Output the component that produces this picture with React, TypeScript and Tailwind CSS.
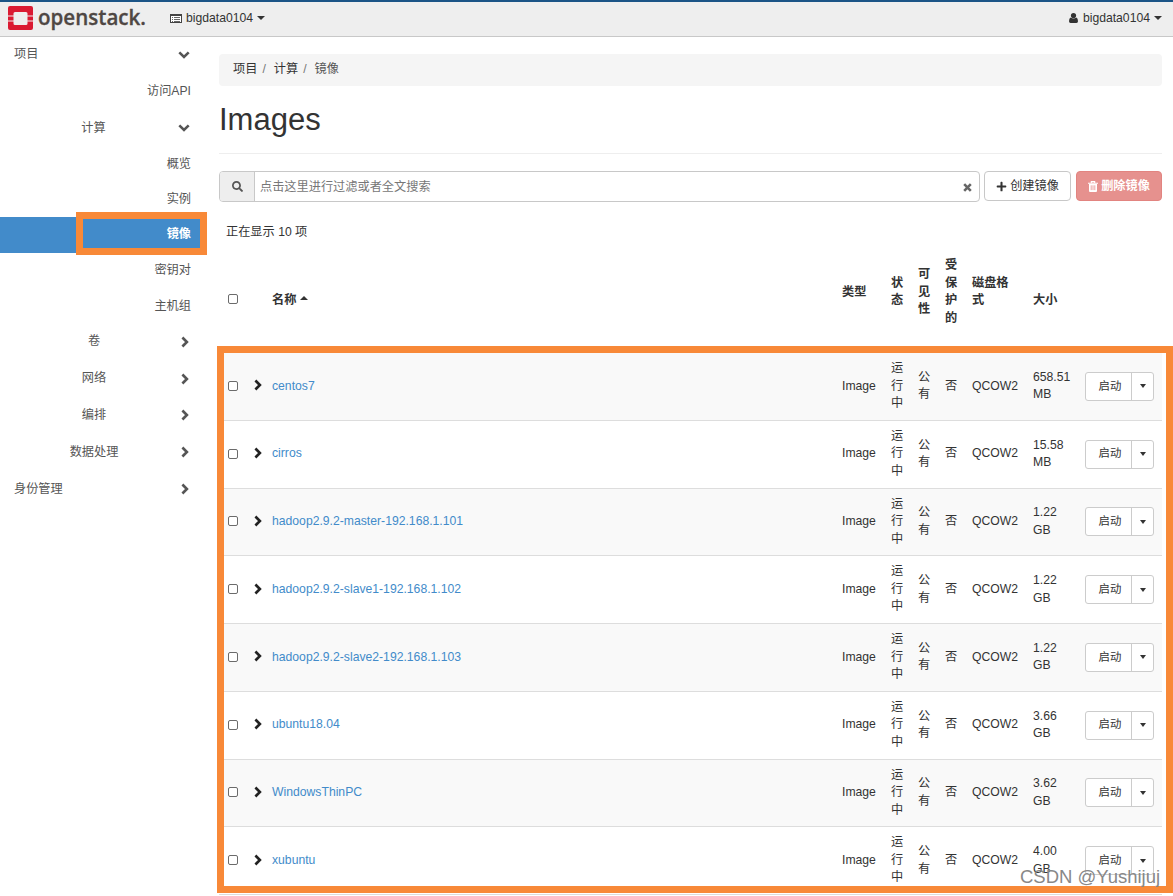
import { FaPlus, FaSearch } from "react-icons/fa";

const images = [
  { name: "centos7", size: "658.51", unit: "MB" },
  { name: "cirros", size: "15.58", unit: "MB" },
  { name: "hadoop2.9.2-master-192.168.1.101", size: "1.22", unit: "GB" },
  { name: "hadoop2.9.2-slave1-192.168.1.102", size: "1.22", unit: "GB" },
  { name: "hadoop2.9.2-slave2-192.168.1.103", size: "1.22", unit: "GB" },
  { name: "ubuntu18.04", size: "3.66", unit: "GB" },
  { name: "WindowsThinPC", size: "3.62", unit: "GB" },
  { name: "xubuntu", size: "4.00", unit: "GB" },
];

const computeItems = ["概览", "实例", "镜像", "密钥对", "主机组"];
const closedGroups = ["卷", "网络", "编排", "数据处理"];

const columns =
  "grid grid-cols-[25px_19px_570px_49px_27px_27px_27px_61px_52px_75px]";

const ChevronRight = ({ className = "" }: { className?: string }) => (
  <svg className={className} width="8" height="12" viewBox="0 0 8 12">
    <path d="M1.4 1.5 L5.9 6 L1.4 10.5" fill="none" stroke="currentColor" strokeWidth="2.6" />
  </svg>
);

const ChevronDown = () => (
  <svg width="12" height="8" viewBox="0 0 12 8">
    <path d="M1.3 1.4 L6 6 L10.7 1.4" fill="none" stroke="currentColor" strokeWidth="2.6" />
  </svg>
);

const Caret = ({ className = "" }: { className?: string }) => (
  <svg className={className} width="8" height="4" viewBox="0 0 8 4">
    <path d="M0 0h8L4 4z" fill="currentColor" />
  </svg>
);

const Checkbox = () => (
  <span className="block h-[10px] w-[10px] rounded-[2px] border border-[#6b6b6b] bg-white" />
);

const Logo = () => (
  <svg width="144" height="32" viewBox="0 0 144 32" className="shrink-0">
    <path
      fill="#da1a32"
      d="M2 3h21a2 2 0 0 1 2 2v7.500h-5.500V10.500a1.500 1.500 0 0 0-1.500-1.500H7a1.500 1.500 0 0 0-1.500 1.500v2H0V5a2 2 0 0 1 2-2zM0 18.500h5.500v2A1.500 1.500 0 0 0 7 22h11a1.500 1.500 0 0 0 1.500-1.500v-2H25V25a2 2 0 0 1-2 2H2a2 2 0 0 1-2-2zM0 13.500h5.500v4H0zM19.500 13.500H25v4h-5.500z"
    />
    <text
      x="30"
      y="21.500"
      fill="#4f4743"
      fontFamily="Open Sans"
      fontSize="21.500"
      fontWeight="600"
      stroke="#4f4743"
      strokeWidth="0.300"
      textLength="108"
      lengthAdjust="spacingAndGlyphs"
    >
      openstack.
    </text>
  </svg>
);

const Header = () => {
  return (
    <header className="flex h-[37px] items-center justify-between border-t-2 border-b border-t-[#1b5486] border-b-[#c8c8c8] bg-[#eeeeee] pl-2 pr-[11px]">
      <div className="flex items-center">
        <Logo />
        <div className="ml-[18px] flex items-center pb-[2px]">
          <svg width="12" height="10" viewBox="0 0 12 10" className="mt-[2px] mr-1" shapeRendering="crispEdges">
            <rect x="0.500" y="0.500" width="11" height="8" fill="#fff" stroke="#444" />
            <path d="M0 1.500h12" stroke="#444" />
            <path d="M2 3.500h1M4 3.500h6M2 5.500h1M4 5.500h6M2 7.500h1M4 7.500h6" stroke="#666" />
          </svg>
          <span className="pt-px">bigdata0104</span>
          <Caret className="ml-1" />
        </div>
      </div>
      <div className="flex items-center pb-[2px]">
        <svg width="9" height="10" viewBox="0 0 9 10" className="mr-[5px]">
          <circle cx="4.500" cy="2.600" r="2.600" fill="#333" />
          <path d="M1.700 4.500q2.800 2 5.600 0Q9 5.200 9 8.300 9 10 7.500 10h-6Q0 10 0 8.300 0 5.200 1.700 4.500z" fill="#333" />
        </svg>
        <span className="pt-px">bigdata0104</span>
        <Caret className="ml-1" />
      </div>
    </header>
  );
};

const Sidebar = () => {
  return (
    <nav className="relative w-[207px] shrink-0 text-[#555555]">
      <div className="flex h-[35px] items-center justify-between pr-[17px] pl-[14px]">
        <span>项目</span>
        <ChevronDown />
      </div>
      <div className="flex h-[37px] items-center justify-end pt-[2px] pr-4">访问API</div>
      <div className="flex h-[37px] items-center pr-[17px]">
        <span className="w-[188px] pt-[2px] text-center">计算</span>
        <span className="-ml-[9px]">
          <ChevronDown />
        </span>
      </div>
      {computeItems.map((item) => (
        <div
          key={item}
          className={
            item === "镜像"
              ? "flex h-9 items-center justify-end bg-[#428bca] pr-4 font-bold text-white"
              : "flex h-[35.300px] items-center justify-end pt-[2px] pr-4"
          }
        >
          {item}
        </div>
      ))}
      {closedGroups.map((group) => (
        <div key={group} className="flex h-[36.900px] items-center">
          <span className="w-[188px] pt-px text-center">{group}</span>
          <ChevronRight className="-ml-[7px]" />
        </div>
      ))}
      <div className="flex h-[37px] items-center justify-between pr-[18px] pl-[14px]">
        <span className="pt-px">身份管理</span>
        <ChevronRight />
      </div>
      <div className="absolute top-[175px] left-[76px] h-[43px] w-[131px] border-[7px] border-[#f88938]" />
    </nav>
  );
};

const Toolbar = () => {
  return (
    <div className="flex items-start">
      <div className="flex h-[31px] w-[761px] rounded-[4px] border border-[#c8c8c8]">
        <div className="flex w-[35px] items-center justify-center rounded-l-[3px] border-r border-[#c8c8c8] bg-[#eeeeee]">
          <FaSearch size={11} color="#555" />
        </div>
        <div className="flex flex-1 items-center justify-between pt-px pr-[7px] pl-[5px] text-[#777777]">
          <span className="pt-px">点击这里进行过滤或者全文搜索</span>
          <svg width="9" height="9" viewBox="0 0 9 9">
            <path d="M1.200 1.200l6.600 6.600M7.800 1.200l-6.600 6.600" stroke="#666" strokeWidth="2.600" />
          </svg>
        </div>
      </div>
      <button className="ml-1 flex h-[30px] w-[87px] items-center justify-center gap-[3px] rounded-[4px] border border-[#c8c8c8] bg-white">
        <FaPlus size={11} />
        <span className="pt-[2px]">创建镜像</span>
      </button>
      <button className="ml-[5px] flex h-[30px] w-[86px] items-center justify-center gap-[3px] rounded-[4px] border border-[#e28480] bg-[#e6918e] font-bold text-white">
        <svg width="10" height="11" viewBox="0 0 10 11">
          <path d="M3.300 1.800V.6h3.400v1.200M0 2.200h10" fill="none" stroke="#fff" strokeWidth="1.100" />
          <path d="M1 3h8v7q0 1-1 1H2q-1 0-1-1z" fill="#fff" />
          <path d="M3.200 4.300v4.800M5 4.300v4.800M6.800 4.300v4.800" stroke="#e6918e" strokeWidth="0.800" />
        </svg>
        <span className="pt-px">删除镜像</span>
      </button>
    </div>
  );
};

const ImageTable = () => {
  return (
    <div className="w-[943px]">
      <div className={`${columns} h-[106.500px] items-center pb-[15px] pl-[9px] font-bold`}>
        <span className="pt-[14px]">
          <Checkbox />
        </span>
        <span />
        <span className="flex items-center gap-1 pt-[16px]">
          名称
          <Caret className="mb-1 rotate-180" />
        </span>
        <span>类型</span>
        <span className="w-[13px]">状态</span>
        <span className="w-[13px]">可见性</span>
        <span className="w-[13px]">受保护的</span>
        <span className="w-[38px] pt-[16px] pb-[16px]">磁盘格式</span>
        <span className="pt-[16px]">大小</span>
      </div>
      {images.map((image) => (
        <div
          key={image.name}
          className={`${columns} h-[67.750px] items-center border-b border-[#dddddd] pl-[9px] odd:bg-white even:bg-[#f9f9f9]`}
        >
          <span className="pb-px">
            <Checkbox />
          </span>
          <ChevronRight className="mb-[2px] ml-[1px] text-[#222222]" />
          <a className="text-[#428bca]">{image.name}</a>
          <span>Image</span>
          <span className="w-[13px]">运行中</span>
          <span className="w-[13px]">公有</span>
          <span>否</span>
          <span>QCOW2</span>
          <span>
            {image.size}
            <br />
            {image.unit}
          </span>
          <div className="flex h-[29px] w-[69px] rounded-[3px] border border-[#cccccc] bg-white text-[11.400px]">
            <span className="flex w-[46px] items-center justify-center border-r border-[#cccccc] pl-[3px]">
              启动
            </span>
            <span className="flex flex-1 items-center justify-center">
              <svg width="6" height="4" viewBox="0 0 6 4">
                <path d="M0 0h6L3 4z" fill="#333" />
              </svg>
            </span>
          </div>
        </div>
      ))}
    </div>
  );
};

const App = () => {
  return (
    <div className="relative h-[896px] w-[1173px] overflow-hidden bg-white font-['Liberation_Sans','Noto_Sans_CJK_SC',sans-serif] text-[12.200px] leading-[17.500px] text-[#333333]">
      <Header />
      <div className="flex">
        <Sidebar />
        <main className="ml-3 w-[943px] shrink-0 pt-[17px]">
          <div className="flex h-8 items-center rounded-[4px] bg-[#f5f5f5] pl-[14px]">
            <span>项目</span>
            <span className="px-[5px] text-[#777777]">/</span>
            <span className="pl-[3px]">计算</span>
            <span className="px-[5px] text-[#777777]">/</span>
            <span className="pl-[3px] text-[#555555]">镜像</span>
          </div>
          <h1 className="mb-[17px] flex h-[68px] items-center border-b border-[#eeeeee] pt-px text-[31px]">
            Images
          </h1>
          <Toolbar />
          <p className="pt-[22px] pb-[5px] pl-[7px]">正在显示 10 项</p>
          <ImageTable />
        </main>
      </div>
      <div className="absolute top-[346px] left-[217px] h-[547px] w-[956px] border-[7px] border-[#f88938]" />
      <div className="absolute top-[866px] left-[1020px] text-[18.500px] leading-[22px] whitespace-nowrap text-[#888888]">
        CSDN @Yushijuj
      </div>
    </div>
  );
};

export default App;
